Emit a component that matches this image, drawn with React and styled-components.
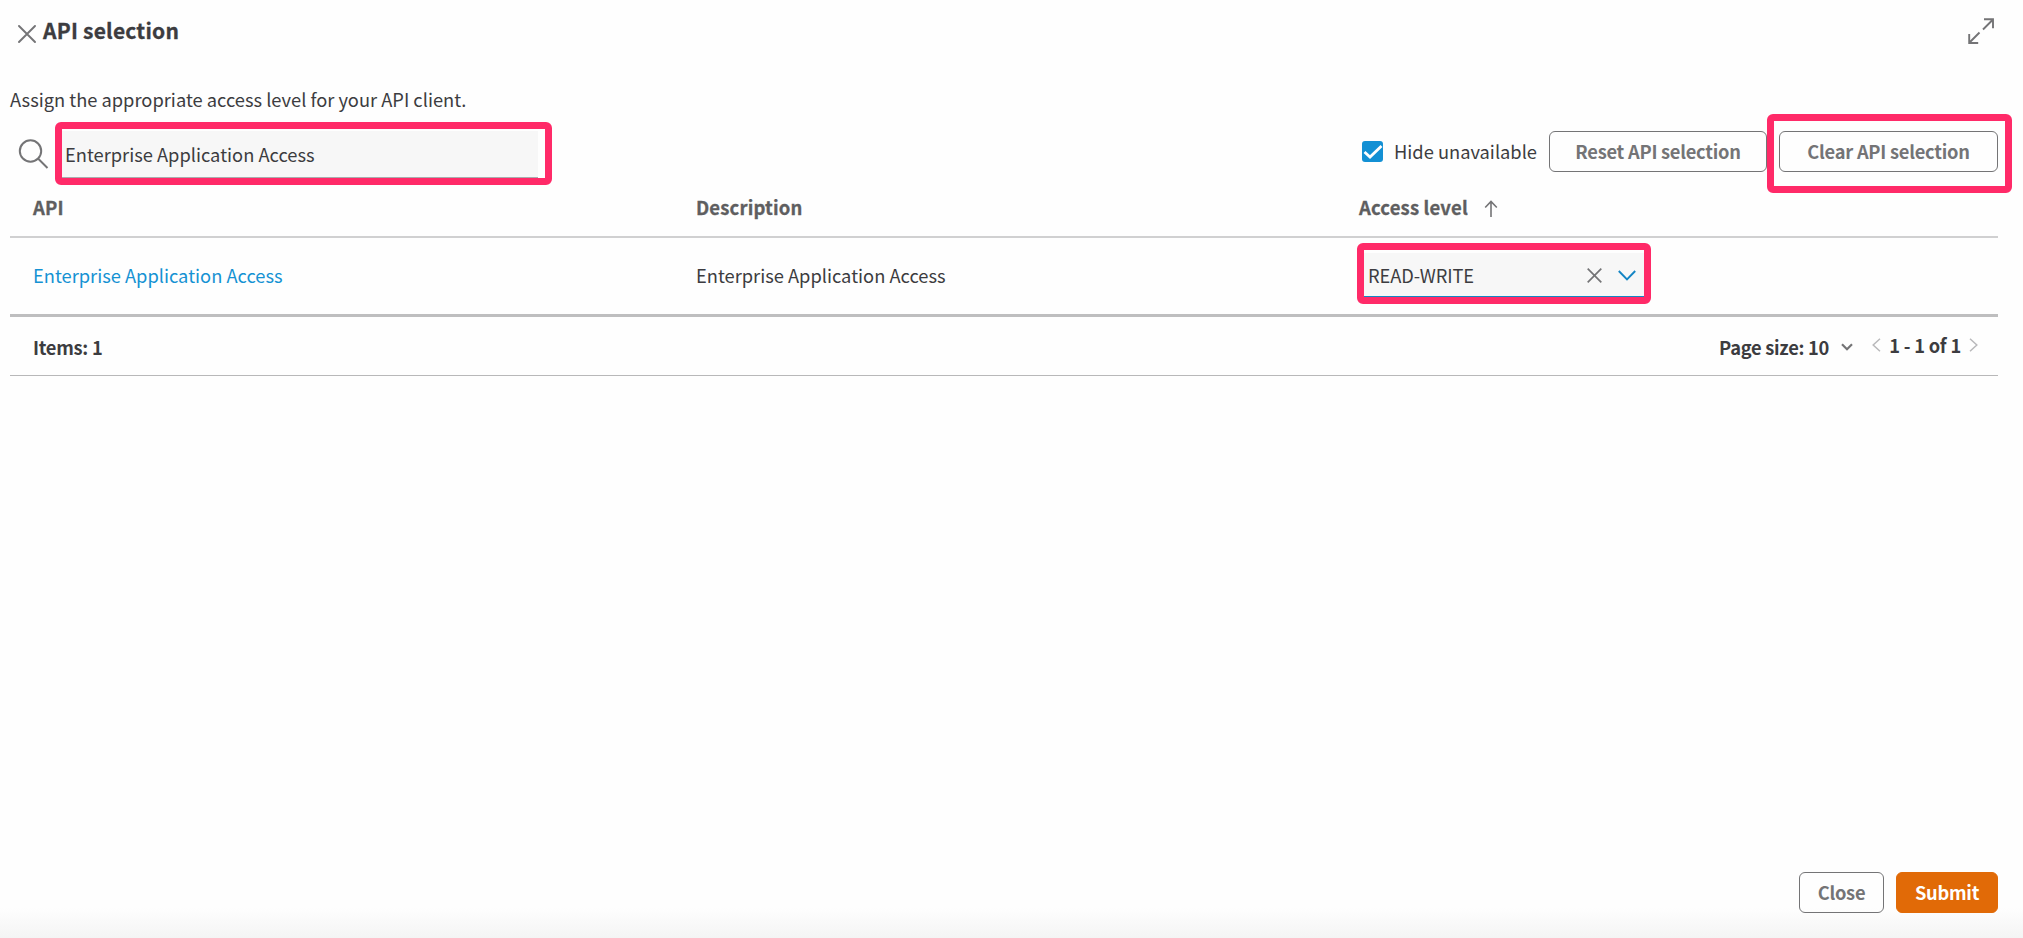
import React from 'react';
import styled, { createGlobalStyle } from 'styled-components';

const GlobalStyle = createGlobalStyle`
    * {
        box-sizing: border-box;
    }

    body {
        margin: 0;
        background: #fefefe;
        color: #3c3c40;
        font-family: 'Noto Sans CJK SC', 'Noto Sans', sans-serif;
        font-size: 18.3px;
        line-height: 26px;
    }
`;

const Page = styled.div`
    display: flex;
    flex-direction: column;
    height: 938px;
    overflow: hidden;
    background: linear-gradient(to top, #f4f4f4, #fefefe 30px);
`;

const Header = styled.header`
    display: flex;
    align-items: flex-start;
    height: 86px;
    padding: 18px 29px 0 18px;
`;

const CloseIcon = styled.svg`
    margin: 7px 7px 0 0;
`;

const Title = styled.h1`
    flex: 1;
    margin: 0;
    font-size: 21px;
    line-height: 25px;
    font-weight: 700;
    letter-spacing: 0.22px;
    -webkit-text-stroke: 0.3px;
`;

const Intro = styled.p`
    height: 28px;
    margin: 0;
    padding-left: 10px;
`;

const Toolbar = styled.div`
    display: flex;
    align-items: center;
    height: 79px;
    padding: 0 11px 0 18px;
`;

const Highlight = styled.div`
    display: flex;
    width: ${(p) => p.$width}px;
    height: ${(p) => p.$height}px;
    margin: ${(p) => p.$margin || 0};
    padding: ${(p) => p.$pad};
    border: 7px solid #ff2a68;
    border-radius: 6px;
    background: #fefefe;
`;

const SearchIcon = styled.svg`
    margin: 2px 6px 0 0;
`;

const SearchInput = styled.input`
    width: 100%;
    height: 100%;
    padding: 0 0 0 3px;
    border: 0;
    border-bottom: 1px solid #a9abad;
    outline: 0;
    background: #f7f7f7;
    color: inherit;
    font: inherit;
`;

const CheckLabel = styled.label`
    display: flex;
    align-items: center;
    width: 187px;
    height: 26px;
    margin: 0 0 4px auto;
    gap: 11px;
    white-space: nowrap;
`;

const CheckText = styled.span`
    margin-bottom: 2px;
`;

const CheckBox = styled.span`
    display: flex;
    width: 21px;
    height: 21px;
    border-radius: 3px;
    background: #1390d4;
`;

const Button = styled.button`
    width: ${(p) => p.$width}px;
    height: 41px;
    margin: ${(p) => p.$margin || 0};
    padding: 0 0 2px;
    border: 1px solid ${(p) => (p.$primary ? '#e16a07' : '#747476')};
    border-radius: 6px;
    background: ${(p) => (p.$primary ? '#e16a07' : 'transparent')};
    color: ${(p) => (p.$primary ? '#fff' : '#747476')};
    font: inherit;
    font-weight: 700;
    letter-spacing: -0.25px;
    white-space: nowrap;
`;

const Table = styled.div`
    margin: 0 25px 0 10px;
`;

const Row = styled.div`
    display: grid;
    grid-template-columns: 663px 661px 1fr;
    align-items: center;
    height: 79px;
    padding: 0 0 2px 23px;
    border-bottom: 3px solid #bebebf;
`;

const HeadRow = styled(Row)`
    height: 45px;
    padding-bottom: 15px;
    border-bottom: 2px solid #d0d0d1;
    color: #5e5e60;
    font-size: 18.5px;
    font-weight: 700;
    letter-spacing: 0.15px;
    -webkit-text-stroke: 0.3px;
`;

const SortHead = styled.div`
    display: flex;
    align-items: center;
    gap: 16px;
    padding-left: 2px;
`;

const SortArrow = styled.svg`
    margin-top: 3px;
`;

const ApiLink = styled.a`
    color: #1592d3;
`;

const Select = styled.div`
    display: flex;
    align-items: center;
    width: 100%;
    padding: 2px 8px 0 4px;
    border-bottom: 1px solid #1485c4;
    background: #f7f7f7;
`;

const SelectValue = styled.span`
    flex: 1;
    letter-spacing: -0.1px;
`;

const SelectChevron = styled.svg`
    margin-left: 16px;
`;

const Footer = styled.div`
    display: flex;
    align-items: center;
    height: 59px;
    padding: 2px 20px 0 23px;
    border-bottom: 1px solid #b8b8b9;
    font-weight: 700;
    letter-spacing: -0.27px;
`;

const PageSize = styled.div`
    display: flex;
    align-items: center;
    gap: 12px;
    margin-left: auto;
`;

const Pager = styled.div`
    display: flex;
    align-items: center;
    gap: 8px;
    margin: 0 0 4px 19px;
    letter-spacing: -0.2px;
`;

const Actions = styled.footer`
    display: flex;
    justify-content: flex-end;
    gap: 12px;
    margin-top: auto;
    padding: 0 25px 25px 0;
`;

const App = () => {
    return (
        <Page>
            <GlobalStyle />
            <Header>
                <CloseIcon width="18" height="18" viewBox="0 0 18 18" fill="none" stroke="#747476" strokeWidth="1.9" strokeLinecap="round">
                    <path d="M1 1l16 16M17 1L1 17" />
                </CloseIcon>
                <Title>API selection</Title>
                <svg width="26" height="26" viewBox="0 0 26 26" fill="none" stroke="#747476" strokeWidth="1.9">
                    <path d="M15 11.5L25 1.5M16 1.2h9v9M11.5 14.5L1.5 24.5M1.2 16v9h9" />
                </svg>
            </Header>

            <Intro>Assign the appropriate access level for your API client.</Intro>

            <Toolbar>
                <SearchIcon width="31" height="31" viewBox="0 0 31 31" fill="none" stroke="#747476" strokeWidth="2">
                    <circle cx="12.5" cy="12" r="10.7" />
                    <path d="M20 19.5l9.5 9.5" />
                </SearchIcon>
                <Highlight $width={497} $height={63} $pad="2px 7px 0 0">
                    <SearchInput defaultValue="Enterprise Application Access" />
                </Highlight>
                <CheckLabel>
                    <CheckBox>
                        <svg width="21" height="21" viewBox="0 0 21 21" fill="none" stroke="#fff" strokeWidth="2.8">
                            <path d="M2.5 11l5.5 5L19.5 5" />
                        </svg>
                    </CheckBox>
                    <CheckText>Hide unavailable</CheckText>
                </CheckLabel>
                <Button $width={218} $margin="0 0 4px">Reset API selection</Button>
                <Highlight $width={245} $height={79} $pad="10px 7px 14px 5px">
                    <Button $width={219}>Clear API selection</Button>
                </Highlight>
            </Toolbar>

            <Table>
                <HeadRow>
                    <div>API</div>
                    <div>Description</div>
                    <SortHead>
                        Access level
                        <SortArrow width="14" height="18" viewBox="0 0 14 18" fill="none" stroke="#747476" strokeWidth="1.6">
                            <path d="M7 17V1.5M1.2 7.5L7 1.5l5.8 6" />
                        </SortArrow>
                    </SortHead>
                </HeadRow>
                <Row>
                    <ApiLink>Enterprise Application Access</ApiLink>
                    <div>Enterprise Application Access</div>
                    <Highlight $width={294} $height={61} $margin="0 0 4px" $pad="3px 0 0 0">
                        <Select>
                            <SelectValue>READ-WRITE</SelectValue>
                            <svg width="15" height="15" viewBox="0 0 15 15" fill="none" stroke="#747476" strokeWidth="1.7">
                                <path d="M.7.7l13.6 13.6M14.3.7L.7 14.3" />
                            </svg>
                            <SelectChevron width="18" height="11" viewBox="0 0 18 11" fill="none" stroke="#1485c4" strokeWidth="1.9">
                                <path d="M.8 1L9 9.5 17.2 1" />
                            </SelectChevron>
                        </Select>
                    </Highlight>
                </Row>
                <Footer>
                    Items: 1
                    <PageSize>
                        Page size: 10
                        <svg width="12" height="8" viewBox="0 0 12 8" fill="none" stroke="#747476" strokeWidth="2.2">
                            <path d="M1 1.2l5 5 5-5" />
                        </svg>
                    </PageSize>
                    <Pager>
                        <svg width="9" height="14" viewBox="0 0 9 14" fill="none" stroke="#b9b9bb" strokeWidth="1.5">
                            <path d="M8 .8L1.2 7 8 13.2" />
                        </svg>
                        1 - 1 of 1
                        <svg width="9" height="14" viewBox="0 0 9 14" fill="none" stroke="#b9b9bb" strokeWidth="1.5">
                            <path d="M1 .8L7.8 7 1 13.2" />
                        </svg>
                    </Pager>
                </Footer>
            </Table>

            <Actions>
                <Button $width={85}>Close</Button>
                <Button $width={102} $primary>Submit</Button>
            </Actions>
        </Page>
    );
};

export default App;
